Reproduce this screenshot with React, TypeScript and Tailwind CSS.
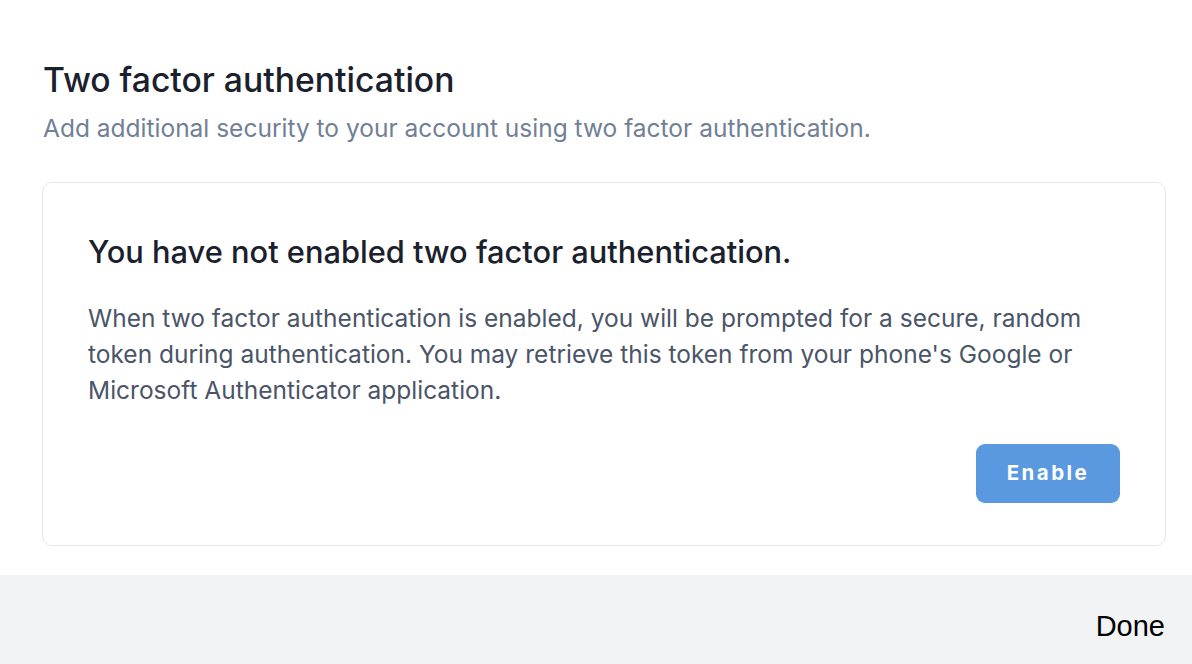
export default function App() {
  return (
    <div className="flex h-[664px] w-[1192px] flex-col bg-white font-['Inter',sans-serif]">
      {/* Dialog body */}
      <div className="flex-1 px-[43px] pt-[60px]">
        <h2 className="text-[33.7px] leading-[40px] font-medium text-[#1a202c]">Two factor authentication</h2>
        <p className="mt-[12px] text-[24.5px] leading-[32px] text-[#718096]">
          Add additional security to your account using two factor authentication.
        </p>

        <div className="mt-[38px] -ml-px w-[1124px] rounded-[10px] border border-[#e5e7eb] px-[45px] pt-[49px] pb-[42px]">
          <h3 className="text-[30.8px] leading-[40px] font-medium text-[#1a202c]">
            You have not enabled two factor authentication.
          </h3>
          <p className="mt-[28px] text-[24.5px] leading-[36px] text-[#4a5568]">
            When two factor authentication is enabled, you will be prompted for a secure, random token during
            authentication. You may retrieve this token from your phone's Google or Microsoft Authenticator
            application.
          </p>
          <div className="mt-[36px] flex justify-end">
            <button className="h-[59px] w-[144px] rounded-[9px] bg-[#5a98e0] text-[20.5px] font-bold tracking-[0.12em] text-white">
              Enable
            </button>
          </div>
        </div>
      </div>

      {/* Footer */}
      <div className="flex h-[89px] items-center justify-end bg-[#f2f3f5] pr-[27px]">
        <button className="pt-[14px] font-['Liberation_Sans',Arial,sans-serif] text-[29px] text-black">Done</button>
      </div>
    </div>
  )
}
